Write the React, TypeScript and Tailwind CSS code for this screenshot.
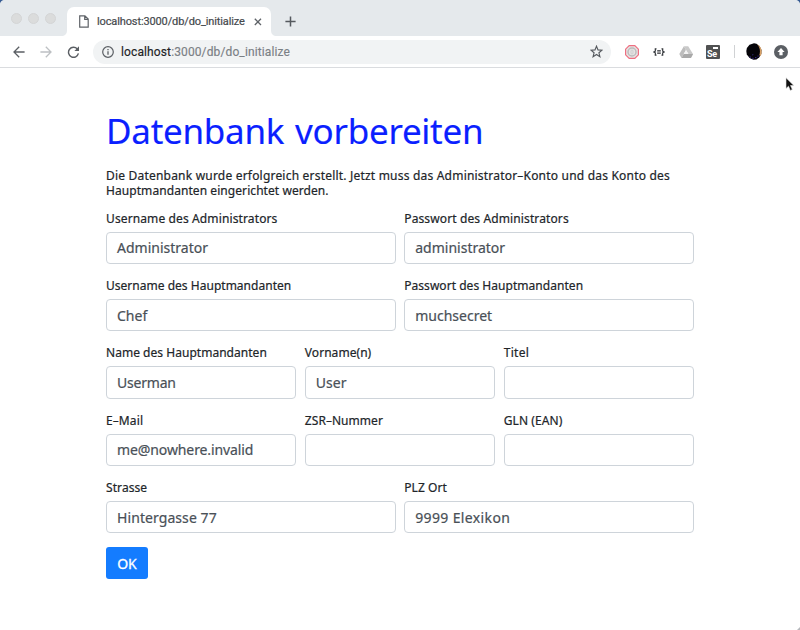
import React from "react";

type FieldProps = {
  label: string;
  value?: string;
  labelClass?: string;
  valueClass?: string;
};

function Field({ label, value = "", labelClass = "", valueClass = "" }: FieldProps) {
  return (
    <div className="min-w-0">
      <div className="mb-[3px] flex h-[21px] items-center whitespace-nowrap pt-px text-[12px] leading-5 text-[#212529] [-webkit-text-stroke:0.2px_#212529]">
        <span className={labelClass}>{label}</span>
      </div>
      <div className="flex h-[32.4px] items-center whitespace-nowrap rounded-[4px] border border-[#ced4da] bg-white px-[10px] text-[14px] text-[#495057] [-webkit-text-stroke:0.2px_#495057]">
        <span className={valueClass}>{value}</span>
      </div>
    </div>
  );
}

function TabStrip() {
  return (
    <div className="relative flex h-9 items-end bg-[#e5e9ec]">
      <div className="flex h-9 w-[67px] items-center gap-[6px] pl-[11px]">
        <span className="size-[11px] rounded-full border border-[#d4d5d6] bg-[#dbdcdc]" />
        <span className="size-[11px] rounded-full border border-[#d4d5d6] bg-[#dbdcdc]" />
        <span className="size-[11px] rounded-full border border-[#d4d5d6] bg-[#dbdcdc]" />
      </div>
      <div className="relative flex h-[29px] w-[204px] items-center rounded-t-[7px] bg-white pl-[12px]">
        <svg className="absolute -left-[6px] bottom-0" width="6" height="6" viewBox="0 0 6 6">
          <path d="M6 0v6H0C4 6 6 4 6 0Z" fill="#fff" />
        </svg>
        <svg className="absolute -right-[6px] bottom-0" width="6" height="6" viewBox="0 0 6 6">
          <path d="M0 0v6h6C2 6 0 4 0 0Z" fill="#fff" />
        </svg>
        <svg width="10" height="13" viewBox="0 0 10 13" fill="none" stroke="#5f6368" strokeWidth="1.2">
          <path d="M.7.8h5.2l3.3 3.3v8.1H.7ZM5.7.8v3.5h3.5" />
        </svg>
        <span className="ml-[8px] w-[149px] whitespace-nowrap pt-px text-[11px] tracking-[-0.12px] text-[#45494d] [-webkit-text-stroke:0.2px_#45494d]">
          localhost:3000/db/do_initialize
        </span>
        <svg className="ml-[8px]" width="8" height="8" viewBox="0 0 8 8" stroke="#5f6368" strokeWidth="1.3">
          <path d="M.8.8l6.2 6.2M7 .8L.8 7" />
        </svg>
      </div>
      <svg className="mb-[9px] ml-[14px]" width="11" height="11" viewBox="0 0 11 11" stroke="#55595e" strokeWidth="1.5">
        <path d="M5.5.4v10.2M.4 5.5h10.2" />
      </svg>
      <svg className="absolute left-0 top-0" width="4" height="4" viewBox="0 0 4 4">
        <path d="M0 0h3.5C1.6.6.6 1.6 0 3.5Z" fill="#355a92" />
      </svg>
      <svg className="absolute right-0 top-0" width="4" height="4" viewBox="0 0 4 4">
        <path d="M4 0H.5C2.4.6 3.4 1.6 4 3.5Z" fill="#355a92" />
      </svg>
    </div>
  );
}

function Toolbar() {
  return (
    <div className="flex h-8 items-center border-b border-[#dadcdf] bg-white">
      <svg className="ml-[13px]" width="12" height="12" viewBox="0 0 12 12" fill="none" stroke="#5b5f64" strokeWidth="1.3">
        <path d="M11.6 6H1M6.2.8L1 6l5.2 5.2" />
      </svg>
      <svg className="ml-[15px]" width="12" height="12" viewBox="0 0 12 12" fill="none" stroke="#bdc0c3" strokeWidth="1.3">
        <path d="M.4 6H11M5.8.8L11 6l-5.2 5.2" />
      </svg>
      <svg className="ml-[15px]" width="13" height="12" viewBox="0 0 13 12" fill="none" stroke="#5b5f64" strokeWidth="1.4">
        <path d="M10.3 3A5 5 0 1 0 11.4 7.4" />
        <path d="M12 .3v4.6H7.4Z" fill="#5b5f64" stroke="none" />
      </svg>
      <div className="ml-[13px] flex h-[24px] w-[518px] items-center rounded-full bg-[#f1f3f4] pl-[9px] pr-[8px]">
        <svg width="12" height="12" viewBox="0 0 12 12" fill="none" stroke="#5b5f64" strokeWidth="1.2">
          <circle cx="6" cy="6" r="5.3" />
          <path d="M6 5.2v3.6M6 3v1.2" strokeWidth="1.3" />
        </svg>
        <span className="ml-[7px] whitespace-nowrap text-[12px] tracking-[0.12px] text-[#7b8085] [-webkit-text-stroke:0.15px]">
          <span className="text-[#202124]">localhost</span>:3000/db/do_initialize
        </span>
        <svg className="ml-auto" width="13" height="13" viewBox="0 0 24 24" fill="none" stroke="#55595e" strokeWidth="2.1">
          <path d="M12 2.2l2.8 6.9 7.4.5-5.7 4.8 1.8 7.2L12 17.6l-6.3 4 1.8-7.2-5.7-4.8 7.4-.5Z" />
        </svg>
      </div>
      <svg className="ml-[14px]" width="14" height="14" viewBox="0 0 14 14" fill="none">
        <path d="M4.2.6h5.6l3.6 3.6v5.6l-3.6 3.6H4.2L.6 9.8V4.2Z" fill="#e6e4e4" stroke="#ee6f81" strokeWidth="1.2" />
        <circle cx="7" cy="7" r="4" stroke="#bcbcbc" strokeWidth="1.5" />
        <rect x="6" y="5" width="2" height="4" rx="1" stroke="#cfcfcf" />
      </svg>
      <svg className="ml-[14px]" width="12" height="8" viewBox="0 0 12 8" fill="none" stroke="#33363a" strokeWidth="1.2">
        <path d="M3.5.8H2.3v2.4L.8 4l1.500.8v2.400h1.200M8.500.8h1.200v2.400l1.500.8-1.500.8v2.400H8.500" />
        <path d="M4.200 2.600h3.600M4.200 4h3.600M4.200 5.400h3.600" strokeWidth=".9" />
      </svg>
      <svg className="ml-[14px]" width="14" height="12" viewBox="0 0 14 12">
        <path d="M4.900.2h4.300L14 8l-2.100 4L7 4Z" fill="#c9c9c9" />
        <path d="M4.900.2L7 4l-4.500 8L.3 8Z" fill="#bdbdbd" />
        <path d="M4.700 8H14l-2.100 4H2.500Z" fill="#a9a9a9" />
        <path d="M7 4l2.300 4H4.700Z" fill="#f3f3f3" />
      </svg>
      <div className="relative ml-[13px] flex h-[14px] w-[14px] items-end rounded-[1px] bg-[#505152] pl-px text-[9px] font-bold leading-[9px] tracking-[-0.2px] text-white">
        <span>Se</span>
        <span className="absolute right-[2px] top-[2px] h-[2px] w-[5px] bg-white" />
      </div>
      <span className="ml-[14px] h-[13px] w-px bg-[#d0d2d4]" />
      <svg className="ml-[11px]" width="16" height="17" viewBox="0 0 16 17">
        <path d="M8 .2l2.500.6L13.500 3l2 4-.2 4-2 3.300-2.800 2.200-3 .3-3-1.300-1.300-1L.8 11.500.3 8l.6-3L3.500 1.800Z" fill="#050409" />
        <path d="M11 1.200c4.200 1.500 6 7.300 3.600 11.700l-1.300-.6C14.500 8.500 14.200 4 11 1.200Z" fill="#d9a268" />
        <path d="M3.500 13.800l1.500.4M6.500 15l1 .7M9 14.500l1.500.3M11.500 13.200l1-.3M6.500 11.500l.7.5" stroke="#392c8b" strokeWidth="1.1" />
      </svg>
      <svg className="ml-[12px]" width="14" height="14" viewBox="0 0 14 14">
        <circle cx="7" cy="7" r="7" fill="#5b5f64" />
        <path d="M7 3L10.600 7H8.600v3.200H5.400V7h-2Z" fill="#fff" />
      </svg>
    </div>
  );
}

export default function App() {
  return (
    <div className="relative h-[630px] w-[800px] overflow-hidden bg-white font-['Noto_Sans',sans-serif]">
      <header className="font-[Roboto,sans-serif]">
        <TabStrip />
        <Toolbar />
      </header>
      <main className="ml-[106px] w-[588px] pt-[41px]">
        <h1 className="h-[44px] whitespace-nowrap text-[35px] leading-[44px] tracking-[-0.27px] text-[#0b1fff] [-webkit-text-stroke:0.15px_#0b1fff] [word-spacing:2px]">
          Datenbank vorbereiten
        </h1>
        <p className="mt-[15px] whitespace-nowrap text-[12px] leading-[15px] text-[#212529] [-webkit-text-stroke:0.2px_#212529]">
          <span className="block h-[15px] tracking-[0.202px]">
            Die Datenbank wurde erfolgreich erstellt. Jetzt muss das Administrator–Konto und das Konto des
          </span>
          <span className="block h-[15px] tracking-[0.07px]">Hauptmandanten eingerichtet werden.</span>
        </p>
        <form className="mt-[9.8px] flex flex-col gap-[10.9px]">
          <div className="grid h-[56.4px] grid-cols-2 gap-x-[8.5px]">
            <Field label="Username des Administrators" value="Administrator" labelClass="tracking-[0.12px]" />
            <Field label="Passwort des Administrators" value="administrator" labelClass="tracking-[0.12px]" />
          </div>
          <div className="grid h-[56.4px] grid-cols-2 gap-x-[8.5px]">
            <Field label="Username des Hauptmandanten" value="Chef" labelClass="tracking-[0.02px]" />
            <Field label="Passwort des Hauptmandanten" value="muchsecret" labelClass="tracking-[0.04px]" />
          </div>
          <div className="grid h-[56.4px] grid-cols-3 gap-x-[8.5px]">
            <Field label="Name des Hauptmandanten" value="Userman" labelClass="tracking-[0.03px]" valueClass="tracking-[-0.2px]" />
            <Field label="Vorname(n)" value="User" labelClass="tracking-[0.05px]" />
            <Field label="Titel" labelClass="tracking-[0.3px]" />
          </div>
          <div className="grid h-[56.4px] grid-cols-3 gap-x-[8.5px]">
            <Field label="E–Mail" value="me@nowhere.invalid" labelClass="tracking-[0.1px]" valueClass="tracking-[-0.1px]" />
            <Field label="ZSR–Nummer" labelClass="tracking-[0.05px]" />
            <Field label="GLN (EAN)" labelClass="tracking-[0.1px]" />
          </div>
          <div className="grid h-[56.4px] grid-cols-2 gap-x-[8.5px]">
            <Field label="Strasse" value="Hintergasse 77" labelClass="tracking-[0.08px]" valueClass="tracking-[0.08px]" />
            <Field label="PLZ Ort" value="9999 Elexikon" labelClass="tracking-[0.08px]" valueClass="tracking-[0.36px]" />
          </div>
        </form>
        <button className="mt-[13.6px] flex h-[32.4px] w-[42px] items-center justify-center rounded-[3px] bg-[#147cff] text-[14px] text-white [-webkit-text-stroke:0.3px_#fff]">
          OK
        </button>
      </main>
      <svg className="absolute left-[785px] top-[77px]" width="10" height="15" viewBox="0 0 10 15">
        <path d="M1 .8v10.700l2.500-2.300 1.800 4.200 2-.9-1.800-4h3.300Z" fill="#111" stroke="#e5e5e5" strokeWidth=".6" />
      </svg>
      <svg className="absolute bottom-0 right-0" width="3" height="3" viewBox="0 0 3 3">
        <path d="M3 0v3H0Z" fill="#b5b8bc" />
      </svg>
    </div>
  );
}
